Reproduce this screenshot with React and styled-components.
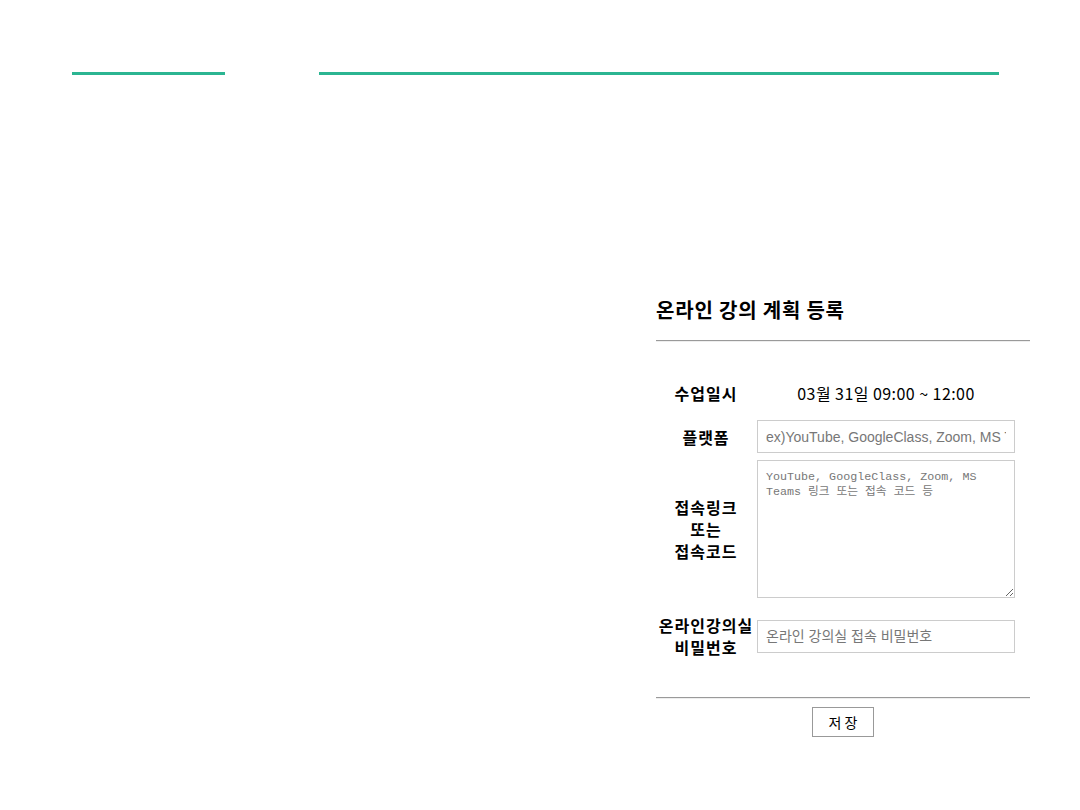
import React from 'react'
import styled, { createGlobalStyle } from 'styled-components'

const GlobalStyle = createGlobalStyle`
  body {
    margin: 0;
    background: #fff;
    color: #000;
    font-family: "Noto Sans CJK KR", "Noto Sans", sans-serif;
  }
`

const App = () => {
  return (
    <Page>
      <GlobalStyle />
      <Header>
        <Bar width={153} />
        <Bar width={680} />
      </Header>

      <Main>
        <Section>
          <Title>온라인 강의 계획 등록</Title>
          <Rule />

          <Form>
            <Row height={36}>
              <Label>수업일시</Label>
              <Value>03월 31일 09:00 ~ 12:00</Value>
            </Row>
            <Row gap={9}>
              <Label>플랫폼</Label>
              <Input placeholder="ex)YouTube, GoogleClass, Zoom, MS Teams" />
            </Row>
            <Row gap={7}>
              <Label>
                접속링크
                <br />
                또는
                <br />
                접속코드
              </Label>
              <TextArea placeholder="YouTube, GoogleClass, Zoom, MS Teams 링크 또는 접속 코드 등" />
            </Row>
            <Row gap={16}>
              <Label>
                온라인강의실
                <br />
                비밀번호
              </Label>
              <Input placeholder="온라인 강의실 접속 비밀번호" />
            </Row>
          </Form>

          <Rule bottom />
          <Footer>
            <SaveButton>저 장</SaveButton>
          </Footer>
        </Section>
      </Main>
    </Page>
  )
}

export default App

const Page = styled.div`
  width: 1080px;
  min-height: 810px;
`

const Header = styled.div`
  display: flex;
  gap: 94px;
  padding: 72px 0 0 72px;
`

const Bar = styled.div`
  width: ${p => p.width}px;
  height: 3px;
  background: #2bb592;
`

const Main = styled.div`
  display: flex;
  justify-content: flex-end;
  padding: 223px 50px 0 0;
`

const Section = styled.section`
  width: 374px;
`

const Title = styled.h2`
  margin: 0;
  font-size: 20px;
  line-height: 24px;
  font-weight: 700;
  letter-spacing: 0.8px;
`

const Rule = styled.hr`
  margin: ${p => (p.bottom ? '39px 0 8px' : '18px 0 33px')};
  height: 0;
  border: 0;
  border-top: 1px solid #9a9a9a;
  border-bottom: 1px solid #eeeeee;
`

const Form = styled.div`
  display: flex;
  flex-direction: column;
`

const Row = styled.div`
  display: flex;
  align-items: center;
  gap: 1px;
  margin-top: ${p => p.gap || 0}px;
  min-height: ${p => p.height || 0}px;
`

const Label = styled.div`
  width: 100px;
  flex: none;
  text-align: center;
  font-size: 16px;
  line-height: 22px;
  font-weight: 700;
  letter-spacing: 1px;
  white-space: nowrap;
`

const Value = styled.div`
  width: 258px;
  text-align: center;
  font-size: 16px;
  line-height: 22px;
  letter-spacing: 0.45px;
`

const Input = styled.input`
  box-sizing: border-box;
  width: 258px;
  height: 33px;
  padding: 0 8px;
  border: 1px solid #cccccc;
  outline: none;
  font-family: "Liberation Sans", "Noto Sans CJK KR", sans-serif;
  font-size: 14px;
  color: #333;

  &::placeholder {
    color: #777;
  }
`

const TextArea = styled.textarea`
  box-sizing: border-box;
  width: 258px;
  height: 138px;
  padding: 9px 8px 7px;
  border: 1px solid #cccccc;
  outline: none;
  resize: vertical;
  font-family: "Liberation Mono", "Noto Sans CJK KR", monospace;
  font-size: 11.7px;
  line-height: 15px;

  &::placeholder {
    color: #777;
  }
`

const Footer = styled.div`
  display: flex;
  justify-content: center;
`

const SaveButton = styled.button`
  width: 62px;
  height: 30px;
  background: #fff;
  border: 1px solid #999;
  font-family: "Noto Sans CJK KR", sans-serif;
  font-size: 14px;
  color: #000;
  cursor: pointer;
`
